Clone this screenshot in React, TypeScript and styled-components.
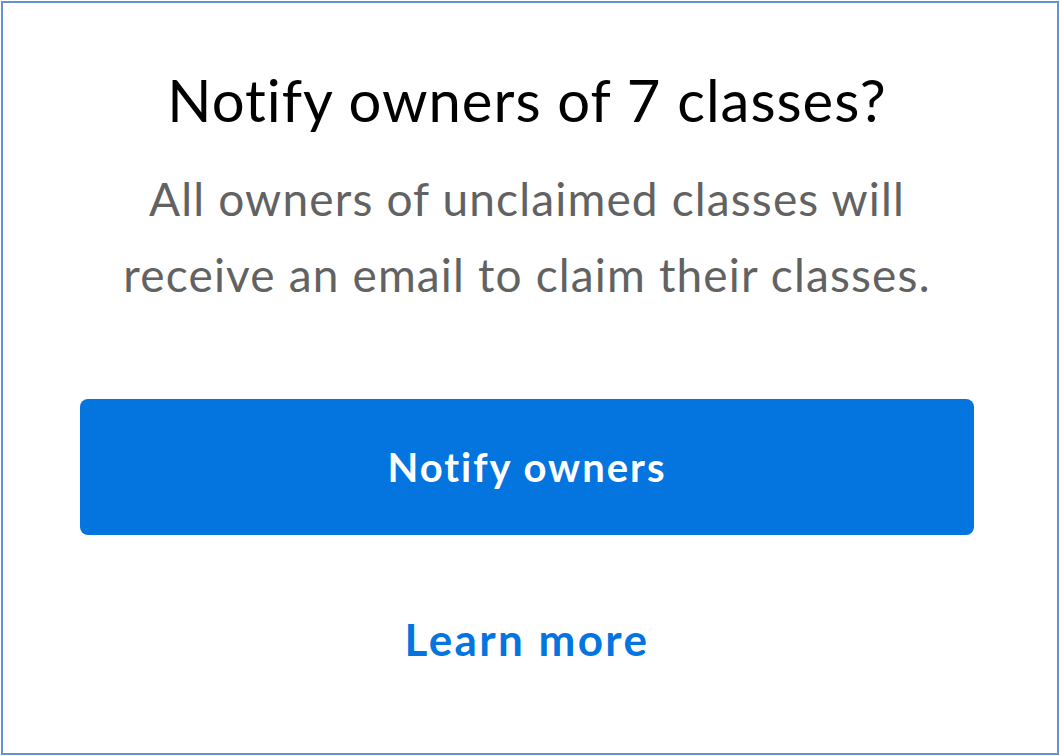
import styled, { createGlobalStyle } from 'styled-components'


const GlobalStyle = createGlobalStyle`
    html, body {
        margin: 0;
        padding: 0;
        background: #ffffff;
    }
    body {
        font-family: Lato, "Open Sans", sans-serif;
        font-variant-ligatures: none;
    }
`

const Frame = styled.div`
    box-sizing: border-box;
    width: 1058px;
    height: 754px;
    margin: 1px;
    border: solid 2px #6890d4;
    display: flex;
    flex-direction: column;
    align-items: center;
    padding: 67px 84px 0 78px;
`

const Title = styled.h1`
    margin: 0;
    font-size: 58px;
    line-height: 60px;
    font-weight: 400;
    letter-spacing: 1px;
    color: #000;
    text-align: center;
`

const Body = styled.p`
    margin: 31px 0 0;
    font-size: 46px;
    line-height: 76px;
    letter-spacing: 1.15px;
    color: #626262;
    text-align: center;
`

const PrimaryButton = styled.button`
    margin-top: 86px;
    width: 894px;
    height: 136px;
    flex: none;
    border: none;
    border-radius: 8px;
    background-color: #0474df;
    color: #fff;
    font-family: inherit;
    font-size: 40px;
    font-weight: 700;
    letter-spacing: 2px;
    cursor: pointer;
`

const LinkButton = styled.a`
    margin-top: 79px;
    font-size: 44px;
    line-height: 50px;
    font-weight: 700;
    letter-spacing: 2.4px;
    color: #0474df;
    text-decoration: none;
    cursor: pointer;
`


export default function App() {
    return (
        <>
            <GlobalStyle />
            <Frame>
                <Title>Notify owners of 7 classes?</Title>
                <Body>
                    All owners of unclaimed classes will
                    <br />
                    receive an email to claim their classes.
                </Body>
                <PrimaryButton>Notify owners</PrimaryButton>
                <LinkButton>Learn more</LinkButton>
            </Frame>
        </>
    )
}
